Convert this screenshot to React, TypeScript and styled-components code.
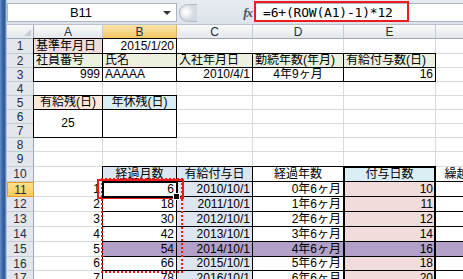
import React from 'react';
import styled, { createGlobalStyle, css } from 'styled-components';

const Global = createGlobalStyle`
  html, body { margin: 0; padding: 0; background: #ffffff; }
  body {
    width: 463px; height: 279px; overflow: hidden;
    font-family: "Liberation Sans", "Noto Sans CJK JP", sans-serif;
    color: #000;
  }
`;

const PINK = '#f2dcdb';
const GREEN = '#ebf1de';
const PEACH = '#fde9d9';
const AQUA = '#daeef3';
const BLUEGREY = '#dce6f1';
const PURPLE = '#b1a0c7';

type Borders = [number, number, number, number];
const ALL: Borders = [1, 1, 1, 1];

interface CellSpec {
  t?: string;
  a?: 'l' | 'c' | 'r';
  bg?: string;
  b?: Borders;
  span?: number;
}

interface RowSpec {
  n: number;
  h: number;
  cells: CellSpec[];
}

const empty = (k: number): CellSpec[] => Array.from({ length: k }, () => ({}));

const DAYS = [10, 11, 12, 14, 16, 18, 20];

const dataRows: RowSpec[] = DAYS.map((d, i) => {
  const hi = i === 4;
  const bg = (base?: string) => (hi ? PURPLE : base);
  return {
    n: 11 + i,
    h: i === 5 ? 14 : 15,
    cells: [
      { t: String(i + 1), a: 'r' },
      { t: String(6 + 12 * i), a: 'r', b: ALL, bg: bg() },
      { t: `${2010 + i}/10/1`, a: 'r', b: ALL, bg: bg(BLUEGREY) },
      { t: `${i}年6ヶ月`, a: 'r', b: ALL, bg: bg() },
      { t: String(d), a: 'r', b: [1, 2, 1, 2], bg: bg(PINK) },
      { b: [1, 1, 1, 0], bg: bg() },
    ],
  };
});

const rows: RowSpec[] = [
  {
    n: 1, h: 15, cells: [
      { t: '基準年月日', a: 'l', bg: PINK, b: ALL },
      { t: '2015/1/20', a: 'r', b: ALL },
      ...empty(4),
    ],
  },
  {
    n: 2, h: 14, cells: [
      { t: '社員番号', a: 'l', bg: GREEN, b: ALL },
      { t: '氏名', a: 'l', bg: GREEN, b: ALL },
      { t: '入社年月日', a: 'l', bg: GREEN, b: ALL },
      { t: '勤続年数(年月)', a: 'l', bg: GREEN, b: ALL },
      { t: '有給付与数(日)', a: 'l', bg: GREEN, b: ALL },
      {},
    ],
  },
  {
    n: 3, h: 14, cells: [
      { t: '999', a: 'r', b: ALL },
      { t: 'AAAAA', a: 'l', b: ALL },
      { t: '2010/4/1', a: 'r', b: ALL },
      { t: '4年9ヶ月', a: 'c', b: ALL },
      { t: '16', a: 'r', b: ALL },
      {},
    ],
  },
  { n: 4, h: 14, cells: empty(6) },
  {
    n: 5, h: 14, cells: [
      { t: '有給残(日)', a: 'c', bg: PEACH, b: ALL },
      { t: '年休残(日)', a: 'c', bg: AQUA, b: ALL },
      ...empty(4),
    ],
  },
  {
    n: 6, h: 14, cells: [
      { t: '25', a: 'c', b: ALL, span: 2 },
      { b: ALL, span: 2 },
      ...empty(4),
    ],
  },
  { n: 7, h: 14, cells: empty(4) },
  { n: 8, h: 14, cells: empty(6) },
  { n: 9, h: 15, cells: empty(6) },
  {
    n: 10, h: 15, cells: [
      {},
      { t: '経過月数', a: 'c', bg: BLUEGREY, b: ALL },
      { t: '有給付与日', a: 'c', bg: BLUEGREY, b: ALL },
      { t: '経過年数', a: 'c', b: ALL },
      { t: '付与日数', a: 'c', bg: AQUA, b: [2, 2, 1, 2] },
      { t: '繰越日数', a: 'c', b: [0, 1, 1, 0] },
    ],
  },
  ...dataRows,
];

const COLS = ['A', 'B', 'C', 'D', 'E', 'F'];

/* ---------- window frame ---------- */

const Window = styled.div`
  display: flex;
  width: 463px;
  height: 279px;
  overflow: hidden;
`;

const FrameEdge = styled.div`
  flex: none;
  width: 7px;
  background: linear-gradient(to right, #6b91c8 0px, #3e6aab 2px, #2f5894 5px, #8fb0dc 6px, #c9d6e6 7px);
`;

const Main = styled.div`
  flex: 1;
  min-width: 0;
  display: flex;
  flex-direction: column;
  overflow: hidden;
`;

/* ---------- formula bar ---------- */

const FormulaBar = styled.div`
  position: relative;
  flex: none;
  height: 25px;
  box-sizing: border-box;
  display: flex;
  align-items: flex-start;
  padding-top: 3px;
  background: linear-gradient(#e6ebf1, #dde3ea);
  border-bottom: 1px solid #b8c1cc;
`;

const NameBox = styled.div`
  flex: none;
  width: 170px;
  height: 19px;
  box-sizing: border-box;
  background: #fff;
  border: 1px solid #abb4bf;
  display: flex;
  align-items: center;
  position: relative;
  font-size: 13px;
`;

const NameText = styled.span`
  flex: 1;
  text-align: center;
  padding-right: 22px;
`;

const DropArrow = styled.span`
  position: absolute;
  right: 5px;
  top: 7px;
  width: 0;
  height: 0;
  border-left: 4px solid transparent;
  border-right: 4px solid transparent;
  border-top: 4px solid #333;
`;

const GripArea = styled.div`
  flex: none;
  width: 22px;
  height: 19px;
  display: flex;
  align-items: center;
  padding-left: 2px;
  box-sizing: border-box;
`;

const GripKnob = styled.div`
  width: 18px;
  height: 18px;
  border-radius: 9px 0 0 9px;
  box-sizing: border-box;
  border: 1px solid #b3bac4;
  border-right: none;
  background: radial-gradient(circle at 6px 7px, #ffffff 0, #f4f6f9 3px, #d3d9e1 8px);
`;

const FxBox = styled.div`
  flex: none;
  width: 55px;
  height: 19px;
  display: flex;
  align-items: center;
  justify-content: flex-end;
  padding-right: 2px;
  box-sizing: border-box;
  font-family: "Liberation Serif", serif;
  font-style: italic;
  font-weight: bold;
  font-size: 13px;
  color: #4b5562;
  letter-spacing: -1px;
`;

const FormulaInput = styled.div`
  flex: 1;
  height: 19px;
  box-sizing: border-box;
  background: #fff;
  border: 1px solid #abb4bf;
  border-right: none;
  display: flex;
  align-items: center;
  padding-left: 8px;
  font-family: "DejaVu Sans Mono", monospace;
  font-size: 13px;
  letter-spacing: -0.2px;
  white-space: nowrap;
`;

const RedBox = styled.div`
  position: absolute;
  left: 247px;
  top: 1px;
  width: 155px;
  height: 21px;
  box-sizing: border-box;
  border: 2px solid #ee1c1c;
  pointer-events: none;
`;

/* ---------- sheet ---------- */

const SheetWrap = styled.div`
  position: relative;
  flex: 1;
  overflow: hidden;
`;

const Grid = styled.div<{ $rows: string }>`
  display: grid;
  grid-template-columns: 27px 69px 74px 76px 91px 92px 66px;
  grid-template-rows: ${(p) => p.$rows};
  width: max-content;
  font-size: 12px;
`;

const ColHead = styled.div<{ $sel?: boolean }>`
  box-sizing: border-box;
  border-right: 1px solid #c6cbd2;
  border-bottom: 1px solid #9ea8b4;
  background: linear-gradient(#f9fafb, #e4e7eb);
  display: flex;
  align-items: center;
  justify-content: center;
  color: #26303a;
  font-size: 12px;
  ${(p) =>
    p.$sel &&
    css`
      background: linear-gradient(#fae3ab, #f4c765);
      border-bottom-color: #e39b33;
      border-right-color: #d9b266;
    `}
`;

const Corner = styled(ColHead)`
  position: relative;
  border-right-color: #9ea8b4;
  &::after {
    content: '';
    position: absolute;
    right: 2px;
    bottom: 2px;
    border-left: 7px solid transparent;
    border-bottom: 7px solid #c8ccd2;
  }
`;

const RowHead = styled.div<{ $sel?: boolean }>`
  box-sizing: border-box;
  border-right: 1px solid #9ea8b4;
  border-bottom: 1px solid #c6cbd2;
  background: #e3e7ec;
  display: flex;
  align-items: center;
  justify-content: center;
  color: #26303a;
  font-size: 12px;
  ${(p) =>
    p.$sel &&
    css`
      background: linear-gradient(#fde08a, #f8cb5a);
      border: 1px solid #e59b34;
    `}
`;

const Cell = styled.div<{
  $bg?: string;
  $align: string;
  $bw: string;
  $span?: number;
  $hasB: boolean;
}>`
  position: relative;
  box-sizing: border-box;
  border-right: 1px solid #d9dadc;
  border-bottom: 1px solid #d9dadc;
  background: ${(p) => p.$bg || '#ffffff'};
  display: flex;
  align-items: center;
  justify-content: ${(p) => p.$align};
  padding: 0 2px 0 2px;
  white-space: nowrap;
  line-height: 13px;
  ${(p) => p.$span && css`grid-row: span ${p.$span};`}
  ${(p) =>
    p.$hasB &&
    css`
      &::after {
        content: '';
        position: absolute;
        inset: -1px;
        border-style: solid;
        border-color: #000;
        border-width: ${p.$bw};
        pointer-events: none;
      }
    `}
`;

const ActiveCell = styled.div`
  position: absolute;
  left: 95px;
  top: 156px;
  width: 76px;
  height: 17px;
  box-sizing: border-box;
  border: 2px solid #000;
  pointer-events: none;
`;

const FillHandle = styled.div`
  position: absolute;
  right: -4px;
  bottom: -4px;
  width: 5px;
  height: 5px;
  background: #000;
  border: 1px solid #fff;
`;

const DottedFrame = styled.div`
  position: absolute;
  left: 94px;
  top: 153px;
  width: 82px;
  height: 95px;
  box-sizing: border-box;
  border: 2px dotted #ff1a1a;
  pointer-events: none;
`;

const RedFrame = styled.div`
  position: absolute;
  left: 90px;
  top: 154px;
  width: 87px;
  height: 20px;
  box-sizing: border-box;
  border: 2px solid #f01818;
  pointer-events: none;
`;

const alignMap = { l: 'flex-start', c: 'center', r: 'flex-end' } as const;

export default function App() {
  const rowTemplate = ['14px', ...rows.map((r) => `${r.h}px`)].join(' ');
  return (
    <>
      <Global />
      <Window>
        <FrameEdge />
        <Main>
          <FormulaBar>
            <NameBox>
              <NameText>B11</NameText>
              <DropArrow />
            </NameBox>
            <GripArea>
              <GripKnob />
            </GripArea>
            <FxBox>fx</FxBox>
            <FormulaInput>=6+(ROW(A1)-1)*12</FormulaInput>
            <RedBox />
          </FormulaBar>
          <SheetWrap>
            <Grid $rows={rowTemplate}>
              <Corner />
              {COLS.map((c) => (
                <ColHead key={c} $sel={c === 'B'}>
                  {c}
                </ColHead>
              ))}
              {rows.map((r) => (
                <React.Fragment key={r.n}>
                  <RowHead $sel={r.n === 11}>{r.n}</RowHead>
                  {r.cells.map((c, i) => {
                    const b = c.b || [0, 0, 0, 0];
                    return (
                      <Cell
                        key={i}
                        $bg={c.bg}
                        $align={alignMap[c.a || 'l']}
                        $bw={b.map((w) => `${w}px`).join(' ')}
                        $hasB={!!c.b}
                        $span={c.span}
                      >
                        {c.t}
                      </Cell>
                    );
                  })}
                </React.Fragment>
              ))}
            </Grid>
            <DottedFrame />
            <RedFrame />
            <ActiveCell>
              <FillHandle />
            </ActiveCell>
          </SheetWrap>
        </Main>
      </Window>
    </>
  );
}
